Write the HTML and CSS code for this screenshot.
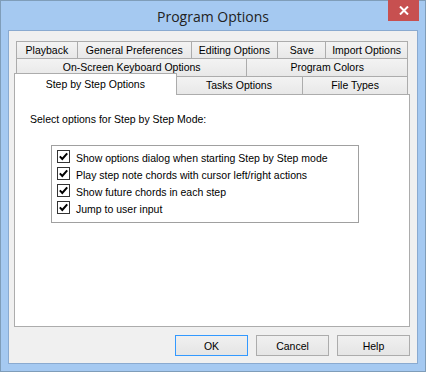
FILE: index.html
```html
<!DOCTYPE html>
<html lang="en">
<head>
    <meta charset="UTF-8">
    <title>Program Options</title>
    <link rel="stylesheet" href="styles.css">
</head>
<body>

    <div class="window">
        <div class="titlebar">
            <span class="title">Program Options</span>
            <div class="close-btn">
                <svg width="10" height="9" viewBox="0 0 10 9">
                    <path d="M1 0.5 L9 8.5 M9 0.5 L1 8.5" stroke="#fff" stroke-width="2"/>
                </svg>
            </div>
        </div>

        <div class="client">
            <div class="tabs">
                <div class="tab-row row-1">
                    <div class="tab" style="width: 61px">Playback</div>
                    <div class="tab" style="width: 114px">General Preferences</div>
                    <div class="tab" style="width: 87px">Editing Options</div>
                    <div class="tab" style="width: 48px">Save</div>
                    <div class="tab last" style="width: 83px">Import Options</div>
                </div>
                <div class="tab-row">
                    <div class="tab" style="width: 231px">On-Screen Keyboard Options</div>
                    <div class="tab last" style="width: 162px">Program Colors</div>
                </div>
                <div class="tab-row">
                    <div class="tab selected" style="width: 163px">Step by Step Options</div>
                    <div class="tab" style="width: 128px">Tasks Options</div>
                    <div class="tab last" style="width: 106px">File Types</div>
                </div>
            </div>

            <div class="panel">
                <p class="intro">Select options for Step by Step Mode:</p>
                <div class="group">
                    <label class="check-row"><span class="checkbox"><svg width="11" height="11" viewBox="0 0 11 11"><path d="M1.8 5.4 L4.3 8 L9.2 2.4" fill="none" stroke="#000" stroke-width="2"/></svg></span>Show options dialog when starting Step by Step mode</label>
                    <label class="check-row"><span class="checkbox"><svg width="11" height="11" viewBox="0 0 11 11"><path d="M1.8 5.4 L4.3 8 L9.2 2.4" fill="none" stroke="#000" stroke-width="2"/></svg></span>Play step note chords with cursor left/right actions</label>
                    <label class="check-row"><span class="checkbox"><svg width="11" height="11" viewBox="0 0 11 11"><path d="M1.8 5.4 L4.3 8 L9.2 2.4" fill="none" stroke="#000" stroke-width="2"/></svg></span>Show future chords in each step</label>
                    <label class="check-row"><span class="checkbox"><svg width="11" height="11" viewBox="0 0 11 11"><path d="M1.8 5.4 L4.3 8 L9.2 2.4" fill="none" stroke="#000" stroke-width="2"/></svg></span>Jump to user input</label>
                </div>
            </div>

            <div class="buttons">
                <button class="btn default">OK</button>
                <button class="btn">Cancel</button>
                <button class="btn">Help</button>
            </div>
        </div>
    </div>

</body>
</html>
```

FILE: styles.css
```css
body {
    margin: 0;
    padding: 0;
    background-color: #fff;
    font-family: 'Liberation Sans', Arial, sans-serif;
    font-size: 10.5px;
    color: #000;
}

.window {
    width: 426px;
    height: 372px;
    box-sizing: border-box;
    border: 1px solid #7f9db9;
    background-color: #a5c9f1;
    padding: 0 7px 7px 7px;
}

.titlebar {
    position: relative;
    height: 29px;
    display: flex;
    align-items: center;
    justify-content: center;
}

.title {
    font-family: 'Open Sans', 'Noto Sans', sans-serif;
    font-size: 14px;
    color: #222;
    margin-top: 2px;
}

.close-btn {
    position: absolute;
    top: -1px;
    right: -1px;
    width: 31px;
    height: 21px;
    background-color: #c75050;
    display: flex;
    align-items: center;
    justify-content: center;
}

.client {
    height: 334px;
    box-sizing: border-box;
    background-color: #f0f0f0;
    border: 1px solid #8aaad0;
    padding: 10px 7px 0 5px;
}

.tabs {
    padding: 0 2px;
}

.tab-row {
    display: flex;
    height: 18px;
}

.row-1 {
    height: 17px;
}

.tab {
    box-sizing: border-box;
    height: 100%;
    border-top: 1px solid #acacac;
    border-left: 1px solid #acacac;
    background: linear-gradient(#f3f3f3, #e8e8e8);
    text-align: center;
    line-height: 16px;
    white-space: nowrap;
}

.tab.last {
    border-right: 1px solid #acacac;
}

.tab.selected {
    position: relative;
    z-index: 1;
    height: 22px;
    margin: -3px -2px 0 -2px;
    background: #fff;
    border-right: 1px solid #acacac;
    line-height: 20px;
}

.panel {
    height: 233px;
    box-sizing: border-box;
    background-color: #fff;
    border: 1px solid #acacac;
    padding: 17px 15px 0 15px;
}

.intro {
    margin: 0;
    line-height: 14px;
}

.group {
    width: 308px;
    box-sizing: border-box;
    margin: 19px 0 0 21px;
    border: 1px solid #a0a0a0;
    padding: 4px 5px;
}

.check-row {
    display: flex;
    align-items: center;
    height: 17px;
    line-height: 13px;
}

.checkbox {
    width: 13px;
    height: 13px;
    box-sizing: border-box;
    border: 1px solid #333;
    background: #fff;
    margin-right: 6px;
    align-self: flex-start;
    display: flex;
    align-items: center;
    justify-content: center;
}

.buttons {
    display: flex;
    justify-content: flex-end;
    gap: 8px;
    margin-top: 8px;
}

.btn {
    width: 73px;
    height: 21px;
    box-sizing: border-box;
    border: 1px solid #acacac;
    background: linear-gradient(#f0f0f0, #e5e5e5);
    font-family: 'Liberation Sans', Arial, sans-serif;
    font-size: 10.5px;
    color: #000;
    padding: 0;
}

.btn.default {
    border-color: #3399ff;
}
```
